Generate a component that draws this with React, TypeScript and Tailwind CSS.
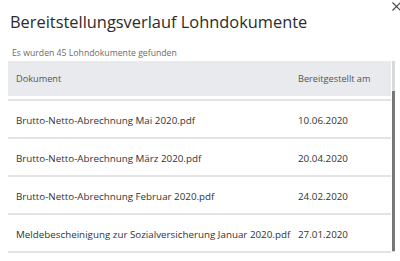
import React from 'react'

const rows = [
    { name: 'Brutto-Netto-Abrechnung Mai 2020.pdf', date: '10.06.2020' },
    { name: 'Brutto-Netto-Abrechnung März 2020.pdf', date: '20.04.2020' },
    { name: 'Brutto-Netto-Abrechnung Februar 2020.pdf', date: '24.02.2020' },
    { name: 'Meldebescheinigung zur Sozialversicherung Januar 2020.pdf', date: '27.01.2020' },
]

const App = () => {
    return (
        <div className="w-[400px] h-[261px] bg-white overflow-hidden font-['Open_Sans',sans-serif]">
            <div className="flex justify-between">
                <h2 className="pl-[10px] pt-[10px] text-[16.4px] leading-[24px] text-[#2b2b2b]">Bereitstellungsverlauf Lohndokumente</h2>
                <button className="w-[8px] h-[8px] mt-[2px] mr-0 text-[#444]">
                    <svg width="9" height="9" viewBox="0 0 9 9" className="block">
                        <path d="M0.5 0.5 L8.5 8.5 M8.5 0.5 L0.5 8.5" stroke="currentColor" strokeWidth="1.1" />
                    </svg>
                </button>
            </div>
            <p className="pl-[12px] mt-[12px] text-[8.7px] leading-[14px] text-[#6b6b6b]">Es wurden 45 Lohndokumente gefunden</p>
            <div className="flex mt-[1px]">
                <div className="ml-[8px] w-[383px]">
                    <div className="flex items-center h-[35px] pt-[1px] bg-[#e8eaed] text-[9.2px] text-[#555]">
                        <span className="pl-[8px] w-[290px]">Dokument</span>
                        <span>Bereitgestellt am</span>
                    </div>
                    <div className="mt-[3px] border-t-2 border-[#e4e4e4]">
                        {rows.map((r) => (
                            <div key={r.name} className="flex items-center h-[38px] pt-[4px] border-b-2 border-[#e4e4e4] text-[9.8px] text-[#333]">
                                <span className="pl-[8px] w-[290px] whitespace-nowrap">{r.name}</span>
                                <span>{r.date}</span>
                            </div>
                        ))}
                    </div>
                </div>
                <div className="ml-[1px] w-[3px] h-[191px] bg-[#d9d9d9] flex flex-col">
                    <div className="mt-[30px] h-[160px] bg-[#777]"></div>
                </div>
            </div>
        </div>
    )
}

export default App
